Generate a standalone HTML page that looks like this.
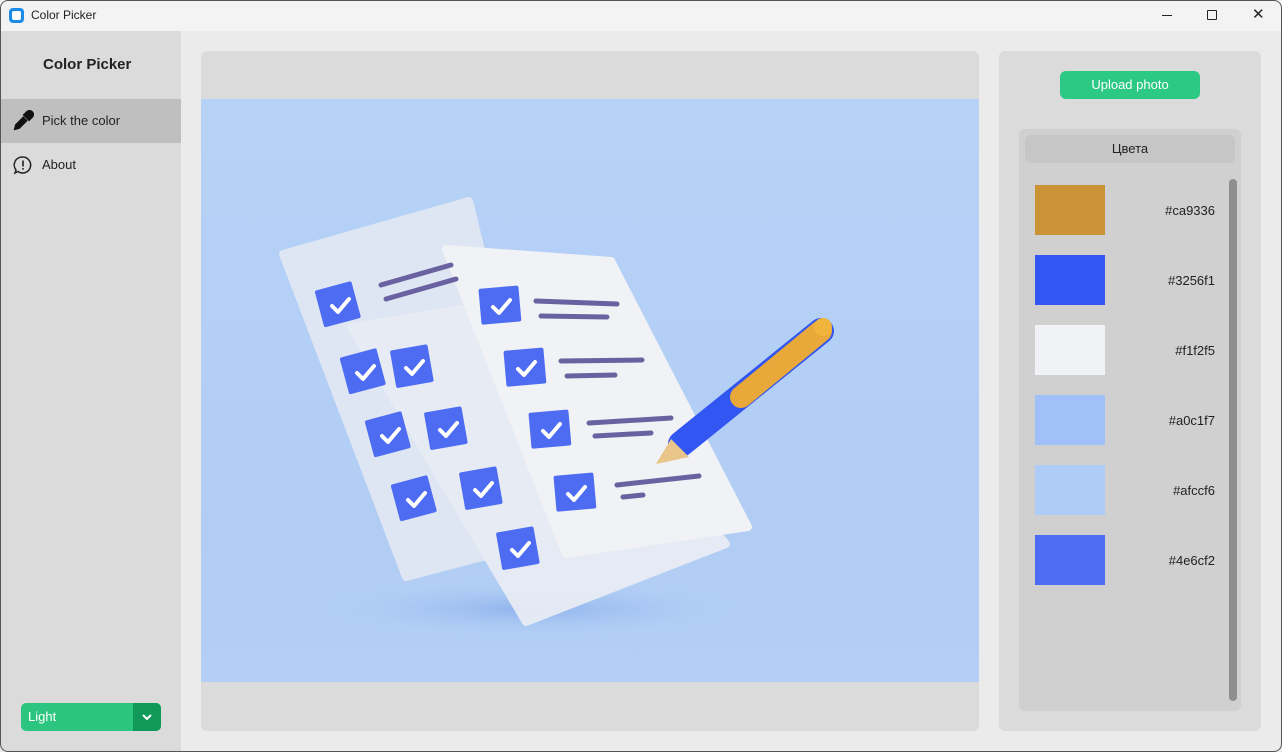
<!DOCTYPE html>
<html><head><meta charset="utf-8"><style>
*{margin:0;padding:0;box-sizing:border-box}
body{width:1282px;height:752px;background:#ebebeb;font-family:"Liberation Sans","Noto Sans CJK SC",sans-serif;position:relative;overflow:hidden}
.abs{position:absolute}
</style></head><body>
<div class="abs" style="left:0;top:0;width:1282px;height:31px;background:#f3f3f3"></div>
<div class="abs" style="left:9px;top:8px;width:15px;height:15px;border-radius:4px;background:#1a8ce8"><div style="margin:3px;width:9px;height:9px;background:#fff;border-radius:2px"></div></div>
<div class="abs" style="left:31px;top:8px;font-size:12px;color:#222">Color Picker</div>
<div class="abs" style="left:1162px;top:15px;width:10px;height:1px;background:#222"></div>
<div class="abs" style="left:1207px;top:10px;width:10px;height:10px;border:1px solid #222;border-radius:1px"></div>
<div class="abs" style="left:1252px;top:9px;font-size:15px;color:#222;line-height:12px">✕</div>

<div class="abs" style="left:1px;top:31px;width:180px;height:720px;background:#dbdbdb"></div>
<div class="abs" style="left:43px;top:56px;font-size:15px;font-weight:bold;color:#222">Color Picker</div>
<div class="abs" style="left:1px;top:99px;width:180px;height:44px;background:#bfbfbf"></div>
<svg class="abs" style="left:12px;top:110px" width="22" height="22" viewBox="0 0 22 22"><path d="M15 2 a2.5 2.5 0 0 1 5 5 l-3 3 -5 -5z" fill="#111" stroke="#111" stroke-width="2"/><path d="M12 7 L4 15 L3 19 L7 18 L15 10" fill="#111" stroke="#111" stroke-width="2"/></svg>
<div class="abs" style="left:42px;top:113px;font-size:13px;color:#222">Pick the color</div>
<svg class="abs" style="left:13px;top:155px" width="20" height="20" viewBox="0 0 20 20"><path d="M10 2a8 8 0 1 1 -5 14.5 l-3 1.5 1 -3A8 8 0 0 1 10 2z" fill="none" stroke="#222" stroke-width="1.5"/><rect x="9.2" y="5.5" width="1.6" height="6" fill="#222"/><rect x="9.2" y="13" width="1.6" height="1.6" fill="#222"/></svg>
<div class="abs" style="left:42px;top:157px;font-size:13px;color:#222">About</div>
<div class="abs" style="left:21px;top:703px;width:140px;height:28px;border-radius:5px;background:#2cc57f;overflow:hidden"><div style="position:absolute;right:0;top:0;width:28px;height:28px;background:#11995a"></div><div style="position:absolute;left:7px;top:6px;font-size:13px;color:#fff">Light</div><svg style="position:absolute;right:9px;top:10px" width="10" height="8"><path d="M1 2l4 4 4-4" stroke="#fff" stroke-width="2" fill="none"/></svg></div>

<div class="abs" style="left:201px;top:51px;width:778px;height:680px;background:#dbdbdb;border-radius:6px"></div>
<svg class="abs" style="left:201px;top:99px" width="778" height="583" viewBox="0 0 778 583">
<defs><linearGradient id="bg" x1="0" y1="0" x2="0" y2="1"><stop offset="0" stop-color="#b7d2f7"/><stop offset="0.75" stop-color="#b1cdf4"/><stop offset="1" stop-color="#b3cff6"/></linearGradient>
<radialGradient id="sh"><stop offset="0" stop-color="#8fb3ec"/><stop offset="1" stop-color="#b3cff6" stop-opacity="0"/></radialGradient></defs>
<rect width="778" height="583" fill="url(#bg)"/>
<ellipse cx="330" cy="510" rx="230" ry="30" fill="url(#sh)"/>
<polygon points="82,155 268,102 350,440 205,478" fill="#e3e8f3" opacity="0.9" stroke="#e3e8f3" stroke-width="8" stroke-linejoin="round"/>
<polygon points="150,228 320,200 525,445 325,523" fill="#e8ecf5" opacity="0.95" stroke="#e8ecf5" stroke-width="8" stroke-linejoin="round"/>
<polygon points="245,150 410,162 547,428 365,455" fill="#f1f2f5" stroke="#f1f2f5" stroke-width="8" stroke-linejoin="round"/>
<g fill="#4e6cf2" stroke="#4e6cf2" stroke-width="4" stroke-linejoin="round">
<rect x="120" y="188" width="34" height="34" transform="rotate(-15 138 206)"/>
<rect x="145" y="255" width="34" height="34" transform="rotate(-15 163 273)"/>
<rect x="170" y="318" width="34" height="34" transform="rotate(-15 188 336)"/>
<rect x="196" y="382" width="34" height="34" transform="rotate(-15 214 400)"/>
<rect x="194" y="250" width="34" height="34" transform="rotate(-10 212 268)"/>
<rect x="228" y="312" width="34" height="34" transform="rotate(-10 246 330)"/>
<rect x="263" y="372" width="34" height="34" transform="rotate(-10 281 390)"/>
<rect x="300" y="432" width="34" height="34" transform="rotate(-10 318 450)"/>
<rect x="281" y="190" width="36" height="32" transform="rotate(-5 300 207)"/>
<rect x="306" y="252" width="36" height="32" transform="rotate(-5 325 269)"/>
<rect x="331" y="314" width="36" height="32" transform="rotate(-5 350 331)"/>
<rect x="356" y="377" width="36" height="32" transform="rotate(-5 375 394)"/>
</g>
<g fill="none" stroke="#fff" stroke-width="4" stroke-linecap="round" stroke-linejoin="round">
<path d="M131 207l6 6 11-13"/><path d="M156 274l6 6 11-13"/><path d="M181 337l6 6 11-13"/><path d="M207 401l6 6 11-13"/>
<path d="M205 269l6 6 11-13"/><path d="M239 331l6 6 11-13"/><path d="M274 391l6 6 11-13"/><path d="M311 451l6 6 11-13"/>
<path d="M292 208l6 6 11-13"/><path d="M317 270l6 6 11-13"/><path d="M342 332l6 6 11-13"/><path d="M367 395l6 6 11-13"/>
</g>
<g stroke="#6a62a0" stroke-width="5" stroke-linecap="round">
<line x1="335" y1="202" x2="416" y2="205"/><line x1="340" y1="217" x2="406" y2="218"/>
<line x1="360" y1="262" x2="441" y2="261"/><line x1="366" y1="277" x2="414" y2="276"/>
<line x1="388" y1="324" x2="470" y2="319"/><line x1="394" y1="337" x2="450" y2="334"/>
<line x1="416" y1="386" x2="498" y2="377"/><line x1="422" y1="398" x2="442" y2="396"/>
<line x1="180" y1="186" x2="250" y2="166"/><line x1="185" y1="200" x2="255" y2="180"/>
</g>
<line x1="480" y1="345" x2="620" y2="232" stroke="#3256f1" stroke-width="26" stroke-linecap="round"/>
<line x1="540" y1="298" x2="620" y2="232" stroke="#e8a93a" stroke-width="22" stroke-linecap="round"/>
<polygon points="470,340 488,358 455,365" fill="#e9c58a"/>
<circle cx="622" cy="228" r="9" fill="#f0b43a"/>
</svg>

<div class="abs" style="left:999px;top:51px;width:262px;height:680px;background:#dbdbdb;border-radius:6px"></div>
<div class="abs" style="left:1060px;top:71px;width:140px;height:28px;background:#2cc985;border-radius:6px;color:#fff;font-size:13px;text-align:center;line-height:28px">Upload photo</div>
<div class="abs" style="left:1019px;top:129px;width:222px;height:582px;background:#d0d0d0;border-radius:6px"></div>
<div class="abs" style="left:1025px;top:135px;width:210px;height:28px;background:#c6c6c6;border-radius:6px;font-size:13px;color:#222;text-align:center;line-height:28px">Цвета</div>
<div class="abs" style="left:1229px;top:179px;width:8px;height:522px;background:#8e8e8e;border-radius:4px"></div>
<div class="abs" style="left:1035px;top:185px;width:70px;height:50px;background:#ca9336"></div>
<div class="abs" style="left:1035px;top:255px;width:70px;height:50px;background:#3256f1"></div>
<div class="abs" style="left:1035px;top:325px;width:70px;height:50px;background:#f1f2f5"></div>
<div class="abs" style="left:1035px;top:395px;width:70px;height:50px;background:#a0c1f7"></div>
<div class="abs" style="left:1035px;top:465px;width:70px;height:50px;background:#afccf6"></div>
<div class="abs" style="left:1035px;top:535px;width:70px;height:50px;background:#4e6cf2"></div>
<div class="abs" style="left:1115px;top:203px;width:100px;text-align:right;font-size:13px;color:#222">#ca9336</div>
<div class="abs" style="left:1115px;top:273px;width:100px;text-align:right;font-size:13px;color:#222">#3256f1</div>
<div class="abs" style="left:1115px;top:343px;width:100px;text-align:right;font-size:13px;color:#222">#f1f2f5</div>
<div class="abs" style="left:1115px;top:413px;width:100px;text-align:right;font-size:13px;color:#222">#a0c1f7</div>
<div class="abs" style="left:1115px;top:483px;width:100px;text-align:right;font-size:13px;color:#222">#afccf6</div>
<div class="abs" style="left:1115px;top:553px;width:100px;text-align:right;font-size:13px;color:#222">#4e6cf2</div>
<div class="abs" style="left:0;top:0;width:1282px;height:752px;border:1px solid #555;border-radius:8px;pointer-events:none"></div>
</body></html>
